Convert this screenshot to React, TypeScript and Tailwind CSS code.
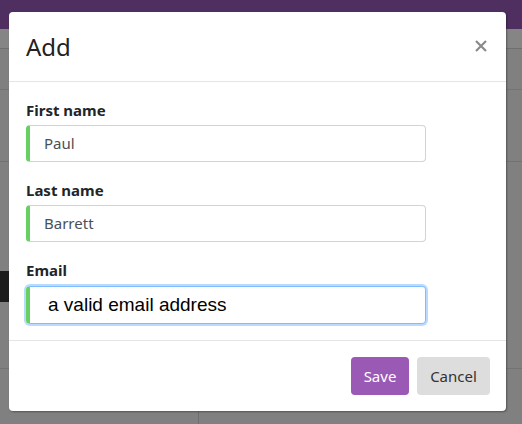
import React from 'react'

const fields = [
    { label: 'First name', value: 'Paul' },
    { label: 'Last name', value: 'Barrett' },
]

export default function App() {
    return (
        <div className="relative w-[522px] h-[424px] overflow-hidden bg-[#808080] font-['Noto_Sans',sans-serif]">
            {/* page behind the backdrop */}
            <div className="h-[29px] bg-[#4f2f5f]" />
            <div className="h-[20px] bg-[#858585] border-b border-[#6f6f6f]" />
            <div className="h-[41px] border-b border-[#747474]" />
            <div className="h-[72px] border-b border-[#727272]" />
            <div className="h-[109px]" />
            <div className="h-[31px] w-[9px] bg-[#1c1c1c]" />
            <div className="h-[67px] border-b border-[#737373]" />
            <div className="ml-[198px] h-[60px] border-l border-[#6e6e6e]" />

            {/* modal */}
            <div className="absolute left-[9px] top-[12px] w-[497px] h-[399px] bg-white rounded-[4px] shadow-[1px_1px_2px_rgba(0,0,0,0.35)] flex flex-col">
                <div className="h-[70px] flex items-center justify-between pl-[17px] pr-[19px] border-b border-[#e5e5e5]">
                    <h1 className="text-[24px] leading-none text-[#222]">Add</h1>
                    <svg width="12" height="12" viewBox="0 0 12 12" className="-mt-[2px]">
                        <path d="M1 1 L11 11 M11 1 L1 11" stroke="#8a8a8a" strokeWidth="2.2" />
                    </svg>
                </div>

                <div className="flex-1 px-[17px] pt-[18px] border-b border-[#e5e5e5]">
                    {fields.map((f) => (
                        <div key={f.label} className="mb-[18px]">
                            <label className="block text-[15px] leading-[20px] font-bold text-[#212529] mb-[5px]">
                                {f.label}
                            </label>
                            <div className="w-[400px] h-[37px] flex items-center border border-[#ced4da] border-l-[4px] border-l-[#66d162] rounded-[4px] pl-[14px] text-[15px] text-[#495057]">
                                {f.value}
                            </div>
                        </div>
                    ))}
                    <label className="block text-[15px] leading-[20px] font-bold text-[#212529] mb-[6px]">
                        Email
                    </label>
                    <div className="w-[400px] h-[38px] flex items-center border border-[#80bdff] border-l-[4px] border-l-[#66d162] rounded-[4px] pl-[18px] shadow-[0_0_0_2px_rgba(128,189,255,0.55)] font-['Liberation_Sans',sans-serif] text-[19px] text-black">
                        a valid email address
                    </div>
                </div>

                <div className="h-[70px] flex items-center justify-end gap-2 pr-4">
                    <button className="w-[58px] h-[38px] rounded-[4px] bg-[#9b59b6] text-white text-[15px]">
                        Save
                    </button>
                    <button className="w-[73px] h-[38px] rounded-[4px] bg-[#dddddd] text-[#333] text-[15px]">
                        Cancel
                    </button>
                </div>
            </div>
        </div>
    )
}
